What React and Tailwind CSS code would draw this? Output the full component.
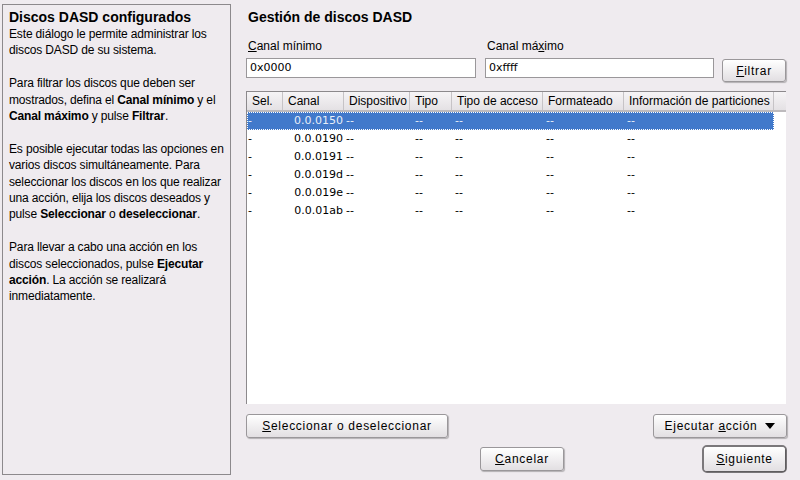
import React from 'react';

const cols = [
  { name: 'Sel.', w: 36 },
  { name: 'Canal', w: 61 },
  { name: 'Dispositivo', w: 66 },
  { name: 'Tipo', w: 42 },
  { name: 'Tipo de acceso', w: 91 },
  { name: 'Formateado', w: 81 },
  { name: 'Información de particiones', w: 150 },
];

const rows = ['0.0.0150', '0.0.0190', '0.0.0191', '0.0.019d', '0.0.019e', '0.0.01ab'];

const Btn = ({ children, className = '' }) => (
  <div
    className={`flex items-center justify-center rounded-[3px] border border-[#9a979a] bg-gradient-to-b from-[#ffffff] to-[#e2dfe2] shadow-[1px_1px_1px_rgba(0,0,0,0.25)] text-[12px] tracking-[0.06em] text-black font-['Liberation_Sans',sans-serif] ${className}`}
  >
    {children}
  </div>
);

const App = () => {
  return (
    <div className="w-[800px] h-[480px] bg-[#efebef] flex font-['Liberation_Sans',sans-serif] text-black overflow-hidden">
      {/* left help panel */}
      <div className="ml-[2px] mt-[4px] mb-[5px] w-[229px] border border-[#8c898c] bg-[#efebef] pl-[6px] pr-[1px] pt-[3px] text-[12px] leading-[16.4px] tracking-[-0.15px]">
        <div className="text-[14px] font-bold leading-[18px] tracking-normal">Discos DASD configurados</div>
        <p>Este diálogo le permite administrar los discos DASD de su sistema.</p>
        <p className="mt-[16.4px]">
          Para filtrar los discos que deben ser mostrados, defina el <b>Canal mínimo</b> y el <b>Canal máximo</b> y pulse <b>Filtrar</b>.
        </p>
        <p className="mt-[16.4px]">
          Es posible ejecutar todas las opciones en varios discos simultáneamente. Para seleccionar los discos en los que realizar una acción, elija los discos deseados y pulse <b>Seleccionar</b> o <b>deseleccionar</b>.
        </p>
        <p className="mt-[16.4px]">
          Para llevar a cabo una acción en los discos seleccionados, pulse <b>Ejecutar acción</b>. La acción se realizará inmediatamente.
        </p>
      </div>

      {/* right main area */}
      <div className="ml-[15px] w-[541px] flex flex-col">
        <div className="mt-[8px] text-[14px] font-bold leading-[18px] pl-[2px]">Gestión de discos DASD</div>

        <div className="mt-[13px] flex items-end">
          <div className="w-[230px] flex flex-col">
            <div className="text-[12px] leading-[14px] pl-[2px] mb-[5px]"><u>C</u>anal mínimo</div>
            <div className="h-[20px] bg-white border border-[#9a979a] leading-[18px] pl-[3px] font-['DejaVu_Sans',sans-serif] text-[11px]">0x0000</div>
          </div>
          <div className="ml-[9px] w-[229px] flex flex-col">
            <div className="text-[12px] leading-[14px] pl-[2px] mb-[5px]">Canal má<u>x</u>imo</div>
            <div className="h-[20px] bg-white border border-[#9a979a] leading-[18px] pl-[3px] font-['DejaVu_Sans',sans-serif] text-[11px]">0xffff</div>
          </div>
          <Btn className="ml-[8px] w-[64px] h-[23px] -mb-[4px]"><u>F</u>iltrar</Btn>
        </div>

        {/* table */}
        <div className="mt-[13px] w-[540px] h-[313px] bg-white border-l border-t border-[#8c898c] flex flex-col">
          <div className="flex h-[20px] bg-gradient-to-b from-[#f6f4f6] to-[#e4e1e4] border-b-2 border-[#bdbabd] text-[12px]">
            {cols.map((c) => (
              <div
                key={c.name}
                style={{ width: c.w }}
                className="shrink-0 border-r border-[#c6c3c6] pl-[5px] leading-[18px] whitespace-nowrap"
              >
                {c.name}
              </div>
            ))}
            <div className="flex-1" />
          </div>
          {rows.map((r, i) => {
            const sel = i === 0;
            return (
              <div
                key={r}
                className={`flex h-[18px] w-[527px] text-[11px] leading-[16px] font-['DejaVu_Sans',sans-serif] ${
                  sel ? 'bg-[#4179cb] text-[#e8eef8] border border-dotted border-white' : 'border border-transparent text-black'
                }`}
              >
                <div className="w-[35px] shrink-0 pl-0">-</div>
                <div className="w-[61px] shrink-0 text-right pr-[1px]">{r}</div>
                <div className="w-[66px] shrink-0 pl-[2px]">--</div>
                <div className="w-[42px] shrink-0 pl-[5px]">--</div>
                <div className="w-[91px] shrink-0 pl-[3px]">--</div>
                <div className="w-[81px] shrink-0 pl-[3px]">--</div>
                <div className="w-[148px] shrink-0 pl-[3px]">--</div>
              </div>
            );
          })}
        </div>

        <div className="mt-[10px] flex justify-between w-[541px]">
          <Btn className="w-[202px] h-[24px]"><u>S</u>eleccionar o deseleccionar</Btn>
          <Btn className="w-[134px] h-[24px] gap-[8px]">
            <span>Ejecutar <u>a</u>cción</span>
            <svg width="10" height="6" viewBox="0 0 10 6"><path d="M0 0h10L5 6z" fill="#000" /></svg>
          </Btn>
        </div>

        <div className="mt-[7px] flex items-center">
          <Btn className="ml-[234px] w-[84px] h-[24px]"><u>C</u>ancelar</Btn>
          <div className="ml-[138px] w-[85px] h-[28px] rounded-[5px] border-2 border-[#7b787b] flex">
            <Btn className="flex-1 rounded-[3px] border-0"><u>S</u>iguiente</Btn>
          </div>
        </div>
      </div>
    </div>
  );
};

export default App;
